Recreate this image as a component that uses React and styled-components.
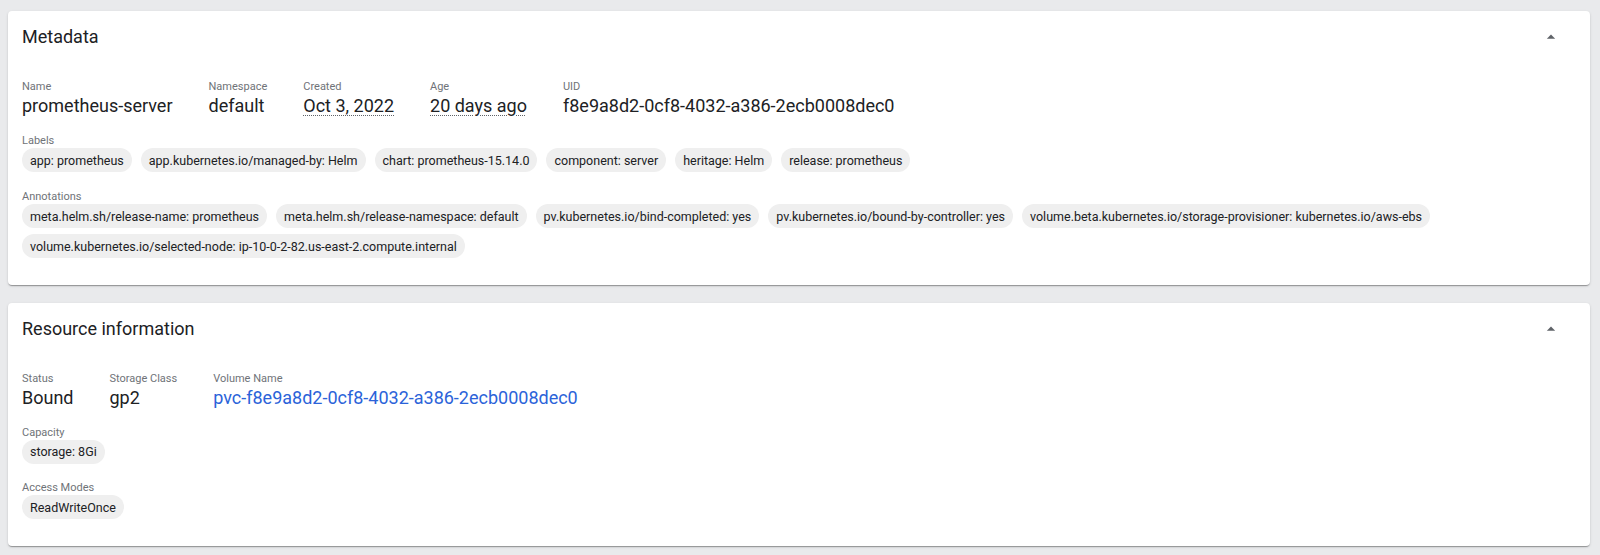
import React from "react";
import styled, { createGlobalStyle } from "styled-components";

const GlobalStyle = createGlobalStyle`
  html, body {
    margin: 0;
    padding: 0;
    background: #e9eaec;
    font-family: Roboto, "Noto Sans", "Liberation Sans", sans-serif;
    color: #202124;
  }
`;

const Page = styled.main`
  display: flex;
  flex-direction: column;
  gap: 18px;
  padding: 11px 10px 8px 8px;
`;

const Card = styled.section`
  background: #fff;
  border-radius: 4px;
  box-shadow: 0 2px 1px -1px rgba(0, 0, 0, 0.2), 0 1px 1px 0 rgba(0, 0, 0, 0.14),
    0 1px 3px 0 rgba(0, 0, 0, 0.12);
`;

const CardHeader = styled.header`
  height: 52px;
  display: flex;
  align-items: center;
  justify-content: space-between;
  padding: 0 29px 0 14px;
`;

const CardTitle = styled.h2`
  margin: 0;
  font-size: 18px;
  font-weight: 400;
  line-height: 24px;
  color: #202124;
`;

const CaretButton = styled.span`
  display: flex;
  width: 20px;
  height: 20px;
  color: #5f6368;
`;

const CardBody = styled.div`
  padding: 17px 14px 25px;
  display: flex;
  flex-direction: column;
  gap: ${(p) => (p.$tight ? "15.5px" : "16px")};
`;

const PropertyRow = styled.div`
  display: flex;
  gap: 36px;
`;

const Property = styled.div`
  display: flex;
  flex-direction: column;
`;

const Label = styled.div`
  font-size: 11px;
  line-height: 14px;
  color: #6f7378;
`;

const Value = styled.div`
  font-size: 18px;
  line-height: 24px;
  color: #202124;
  white-space: nowrap;
  ${(p) =>
    p.$dotted &&
    `
    text-decoration: underline dotted #5f6368;
    text-decoration-thickness: 1px;
    text-underline-offset: 3px;
  `}
`;

const Link = styled.a`
  font-size: 18px;
  line-height: 24px;
  color: #2b63d9;
  text-decoration: none;
  white-space: nowrap;
`;

const ChipGroup = styled.div`
  display: flex;
  flex-direction: column;
`;

const ChipList = styled.div`
  display: flex;
  flex-wrap: wrap;
  gap: 6px 9px;
  margin-bottom: 2px;
`;

const Chip = styled.span`
  display: inline-flex;
  align-items: center;
  height: 24px;
  padding: 0 8px;
  border-radius: 12px;
  background: #efefef;
  font-size: 12.5px;
  color: #202124;
  white-space: nowrap;
`;

const Caret = () => (
  <CaretButton>
    <svg viewBox="0 0 24 24" width="20" height="20" fill="currentColor">
      <path d="M7 14l5-5 5 5z" />
    </svg>
  </CaretButton>
);

const Chips = ({ label, items }) => (
  <ChipGroup>
    <Label>{label}</Label>
    <ChipList>
      {items.map((t) => (
        <Chip key={t}>{t}</Chip>
      ))}
    </ChipList>
  </ChipGroup>
);

const labels = [
  "app: prometheus",
  "app.kubernetes.io/managed-by: Helm",
  "chart: prometheus-15.14.0",
  "component: server",
  "heritage: Helm",
  "release: prometheus",
];

const annotations = [
  "meta.helm.sh/release-name: prometheus",
  "meta.helm.sh/release-namespace: default",
  "pv.kubernetes.io/bind-completed: yes",
  "pv.kubernetes.io/bound-by-controller: yes",
  "volume.beta.kubernetes.io/storage-provisioner: kubernetes.io/aws-ebs",
  "volume.kubernetes.io/selected-node: ip-10-0-2-82.us-east-2.compute.internal",
];

export default function App() {
  return (
    <>
      <GlobalStyle />
      <Page>
        <Card>
          <CardHeader>
            <CardTitle>Metadata</CardTitle>
            <Caret />
          </CardHeader>
          <CardBody>
            <PropertyRow>
              <Property>
                <Label>Name</Label>
                <Value>prometheus-server</Value>
              </Property>
              <Property>
                <Label>Namespace</Label>
                <Value>default</Value>
              </Property>
              <Property>
                <Label>Created</Label>
                <Value $dotted>Oct 3, 2022</Value>
              </Property>
              <Property>
                <Label>Age</Label>
                <Value $dotted>20 days ago</Value>
              </Property>
              <Property>
                <Label>UID</Label>
                <Value>f8e9a8d2-0cf8-4032-a386-2ecb0008dec0</Value>
              </Property>
            </PropertyRow>
            <Chips label="Labels" items={labels} />
            <Chips label="Annotations" items={annotations} />
          </CardBody>
        </Card>
        <Card>
          <CardHeader>
            <CardTitle>Resource information</CardTitle>
            <Caret />
          </CardHeader>
          <CardBody $tight>
            <PropertyRow>
              <Property>
                <Label>Status</Label>
                <Value>Bound</Value>
              </Property>
              <Property>
                <Label>Storage Class</Label>
                <Value>gp2</Value>
              </Property>
              <Property>
                <Label>Volume Name</Label>
                <Link href="#">pvc-f8e9a8d2-0cf8-4032-a386-2ecb0008dec0</Link>
              </Property>
            </PropertyRow>
            <Chips label="Capacity" items={["storage: 8Gi"]} />
            <Chips label="Access Modes" items={["ReadWriteOnce"]} />
          </CardBody>
        </Card>
      </Page>
    </>
  );
}
